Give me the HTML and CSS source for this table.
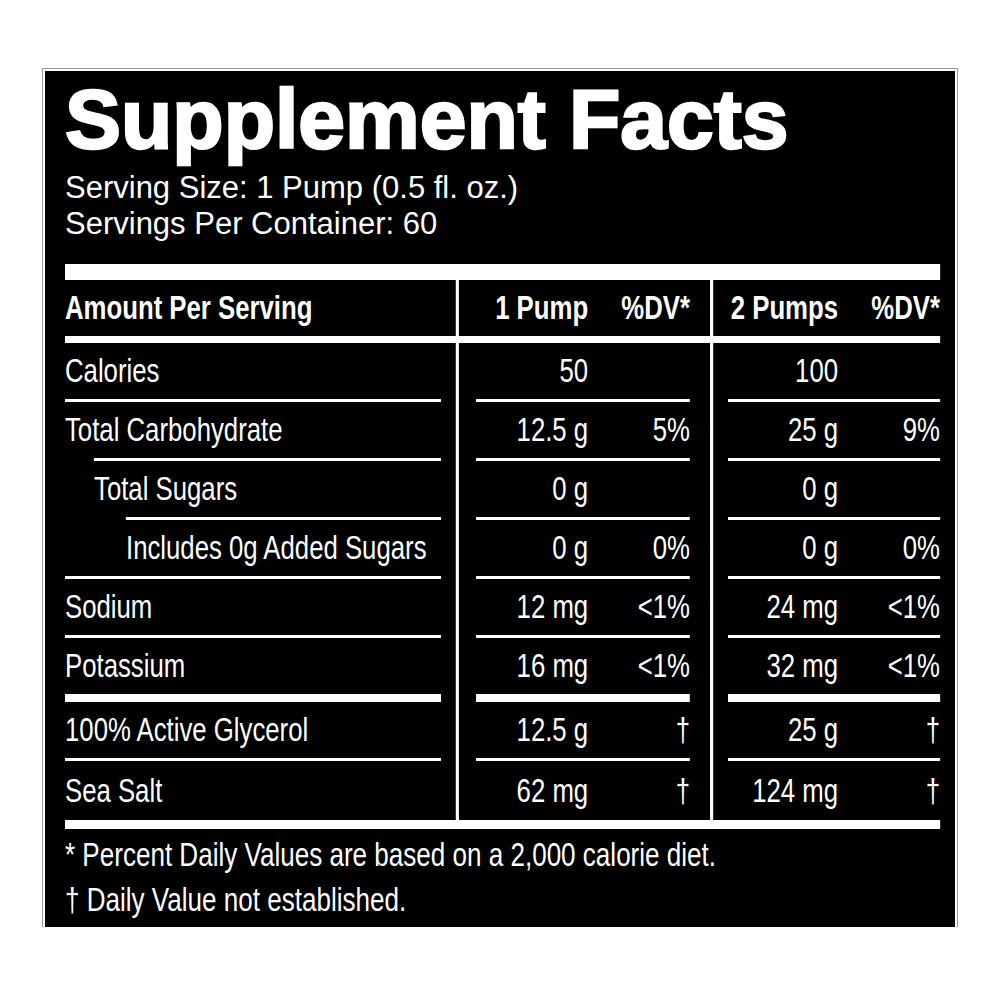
FILE: index.html
```html
<!DOCTYPE html>
<html lang="en">
    <head>
        <meta charset="UTF-8">
        <meta name="viewport" content="width=device-width, initial-scale=1.0">
        <title>Supplement Facts</title>
        <link rel="stylesheet" href="styles.css">
    </head>
    <body>
        <div class="label">
            <h1 class="title">Supplement Facts</h1>
            <div class="serving">
                <p>Serving Size: 1 Pump (0.5 fl. oz.)</p>
                <p>Servings Per Container: 60</p>
            </div>

            <!-- the table is laid out wide, then squeezed to a condensed face -->
            <div class="facts">
                <div class="bar bar-top"></div>
                <div class="row head">
                    <div class="cell name"><div class="in">Amount Per Serving</div></div>
                    <div class="cell dose-one"><div class="in"><span class="amt">1 Pump</span><span class="dv">%DV*</span></div></div>
                    <div class="cell dose-two"><div class="in"><span class="amt">2 Pumps</span><span class="dv">%DV*</span></div></div>
                </div>
                <div class="bar bar-mid"></div>

                <div class="row first">
                    <div class="cell name"><div class="in">Calories</div></div>
                    <div class="cell dose-one"><div class="in"><span class="amt">50</span><span class="dv"></span></div></div>
                    <div class="cell dose-two"><div class="in"><span class="amt">100</span><span class="dv"></span></div></div>
                </div>
                <div class="row">
                    <div class="cell name"><div class="in">Total Carbohydrate</div></div>
                    <div class="cell dose-one"><div class="in"><span class="amt">12.5 g</span><span class="dv">5%</span></div></div>
                    <div class="cell dose-two"><div class="in"><span class="amt">25 g</span><span class="dv">9%</span></div></div>
                </div>
                <div class="row sub">
                    <div class="cell name"><div class="in">Total Sugars</div></div>
                    <div class="cell dose-one"><div class="in"><span class="amt">0 g</span><span class="dv"></span></div></div>
                    <div class="cell dose-two"><div class="in"><span class="amt">0 g</span><span class="dv"></span></div></div>
                </div>
                <div class="row sub-two">
                    <div class="cell name"><div class="in">Includes 0g Added Sugars</div></div>
                    <div class="cell dose-one"><div class="in"><span class="amt">0 g</span><span class="dv">0%</span></div></div>
                    <div class="cell dose-two"><div class="in"><span class="amt">0 g</span><span class="dv">0%</span></div></div>
                </div>
                <div class="row">
                    <div class="cell name"><div class="in">Sodium</div></div>
                    <div class="cell dose-one"><div class="in"><span class="amt">12 mg</span><span class="dv">&lt;1%</span></div></div>
                    <div class="cell dose-two"><div class="in"><span class="amt">24 mg</span><span class="dv">&lt;1%</span></div></div>
                </div>
                <div class="row">
                    <div class="cell name"><div class="in">Potassium</div></div>
                    <div class="cell dose-one"><div class="in"><span class="amt">16 mg</span><span class="dv">&lt;1%</span></div></div>
                    <div class="cell dose-two"><div class="in"><span class="amt">32 mg</span><span class="dv">&lt;1%</span></div></div>
                </div>
                <div class="row thick">
                    <div class="cell name"><div class="in">100% Active Glycerol</div></div>
                    <div class="cell dose-one"><div class="in"><span class="amt">12.5 g</span><span class="dv">&dagger;</span></div></div>
                    <div class="cell dose-two"><div class="in"><span class="amt">25 g</span><span class="dv">&dagger;</span></div></div>
                </div>
                <div class="row last">
                    <div class="cell name"><div class="in">Sea Salt</div></div>
                    <div class="cell dose-one"><div class="in"><span class="amt">62 mg</span><span class="dv">&dagger;</span></div></div>
                    <div class="cell dose-two"><div class="in"><span class="amt">124 mg</span><span class="dv">&dagger;</span></div></div>
                </div>
                <div class="bar bar-bottom"></div>

                <div class="notes">
                    <p>* Percent Daily Values are based on a 2,000 calorie diet.</p>
                    <p>&dagger; Daily Value not established.</p>
                </div>
            </div>
        </div>
    </body>
</html>
```

FILE: styles.css
```css
*{
    margin: 0;
    padding: 0;
    box-sizing: border-box;
}
body{
    background-color: #fff;
}
.label{
    width: 910px;
    height: 856px;
    margin: 71px 0 0 45px;
    padding: 6px 15px 0 20px;
    background-color: #000;
    color: #fff;
    outline: 1px solid #9a9a9a;
    outline-offset: 2px;
    overflow: hidden;
    font-family: "Liberation Sans", Arial, sans-serif;
}
.title{
    font-size: 84px;
    line-height: 84px;
    font-weight: bold;
    -webkit-text-stroke: 2.5px #fff;
}
.serving{
    margin-top: 9px;
    font-size: 31px;
    line-height: 36px;
}
/* 875px wide on screen: 1121.8 * 0.78 */
.facts{
    width: 1121.8px;
    margin-top: 22px;
    transform: scaleX(0.78);
    transform-origin: left top;
    font-size: 33px;
}
.bar{
    background-color: #fff;
}
.bar-top{
    height: 16px;
}
.bar-mid{
    height: 7px;
}
.bar-bottom{
    height: 9px;
}
.row{
    display: grid;
    grid-template-columns: 501.3px 325.6px 294.9px;
}
.cell.name{
    padding-right: 19.2px;
}
.cell.dose-one{
    border-left: 4px solid #fff;
    padding: 0 25.6px 0 21.8px;
}
.cell.dose-two{
    border-left: 4px solid #fff;
    padding-left: 19.2px;
}
.in{
    height: 59px;
    display: flex;
    align-items: center;
    border-top: 3px solid #fff;
    white-space: nowrap;
}
.head .in,
.first .in{
    height: 56px;
    border-top: none;
}
.head{
    font-weight: bold;
}
.sub .name .in{
    margin-left: 37.2px;
}
.sub-two .name .in{
    margin-left: 78.2px;
}
.thick .in{
    height: 64px;
    border-top-width: 8px;
}
.last .in{
    height: 62px;
}
.amt{
    text-align: right;
}
.dose-one .amt{
    width: 143.6px;
}
.dose-two .amt{
    width: 141px;
}
.dv{
    flex: 1;
    text-align: right;
}
.notes{
    margin-top: 3px;
    font-size: 33.4px;
    line-height: 45px;
}
```
